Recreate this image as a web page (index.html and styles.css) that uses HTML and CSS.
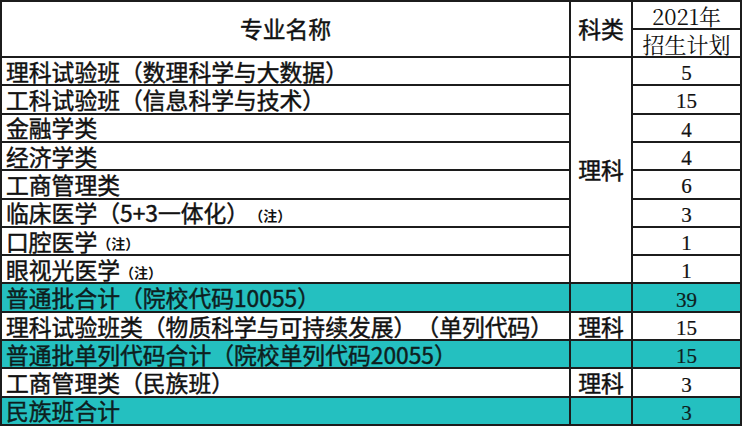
FILE: index.html
```html
<!DOCTYPE html>
<html lang="zh-CN">
<head>
<meta charset="utf-8">
<title>2021年招生计划</title>
<link rel="stylesheet" href="styles.css">
</head>
<body>
<div class="sheet">
  <div class="c hname">专业名称</div>
  <div class="c hcat">科类</div>
  <div class="c hyear">2021年</div>
  <div class="c hplan">招生计划</div>

  <div class="c name">理科试验班（数理科学与大数据）</div>
  <div class="c cat span8">理科</div>
  <div class="c num">5</div>

  <div class="c name">工科试验班（信息科学与技术）</div>
  <div class="c num">15</div>

  <div class="c name">金融学类</div>
  <div class="c num">4</div>

  <div class="c name">经济学类</div>
  <div class="c num">4</div>

  <div class="c name">工商管理类</div>
  <div class="c num">6</div>

  <div class="c name">临床医学（5+3一体化）<span class="note">（注）</span></div>
  <div class="c num">3</div>

  <div class="c name">口腔医学<span class="note">（注）</span></div>
  <div class="c num">1</div>

  <div class="c name">眼视光医学<span class="note">（注）</span></div>
  <div class="c num">1</div>

  <div class="c name teal">普通批合计（院校代码10055）</div>
  <div class="c cat teal"></div>
  <div class="c num teal">39</div>

  <div class="c name">理科试验班类（物质科学与可持续发展）（单列代码）</div>
  <div class="c cat">理科</div>
  <div class="c num">15</div>

  <div class="c name teal">普通批单列代码合计（院校单列代码20055）</div>
  <div class="c cat teal"></div>
  <div class="c num teal">15</div>

  <div class="c name">工商管理类（民族班）</div>
  <div class="c cat">理科</div>
  <div class="c num">3</div>

  <div class="c name teal">民族班合计</div>
  <div class="c cat teal"></div>
  <div class="c num teal">3</div>
</div>
</body>
</html>
```

FILE: styles.css
```css
html, body {
  margin: 0;
  padding: 0;
  background: #ffffff;
}

body {
  width: 744px;
  height: 426px;
  overflow: hidden;
  font-family: "Noto Sans CJK SC", "Noto Sans", sans-serif;
  color: #111111;
  text-spacing-trim: space-all;
}

.sheet {
  box-sizing: border-box;
  width: 742px;
  height: 426px;
  display: grid;
  grid-template-columns: 567px 60px 107px;
  grid-template-rows: 26px 26px repeat(13, minmax(0, 1fr));
  gap: 2px;
  padding: 2px;
  background: #1c1c1c;
}

.c {
  min-height: 0;
  background: #ffffff;
  display: flex;
  align-items: center;
  justify-content: center;
  font-size: 22.8px;
  font-weight: 400;
  line-height: 1;
  white-space: nowrap;
  -webkit-text-stroke: 0.45px currentColor;
}

.hname {
  grid-column: 1;
  grid-row: span 2;
  padding-top: 1px;
}

.hcat {
  grid-column: 2;
  grid-row: span 2;
  padding-top: 1px;
}

.hyear,
.hplan {
  grid-column: 3;
  font-family: "Noto Serif CJK SC", "Liberation Serif", "Noto Sans CJK SC", serif;
  font-size: 22px;
  -webkit-text-stroke: 0;
  padding-top: 2px;
}

.name {
  grid-column: 1;
  justify-content: flex-start;
  padding-left: 4px;
  padding-top: 2px;
}

.cat {
  grid-column: 2;
  padding-top: 2px;
}

.span8 {
  grid-row: span 8;
  padding-top: 0;
}

.num {
  grid-column: 3;
  font-family: "Liberation Serif", serif;
  font-size: 21px;
  -webkit-text-stroke: 0.2px currentColor;
  padding-top: 5px;
}

.note {
  font-size: 14px;
  font-weight: 700;
  padding-top: 3px;
  -webkit-text-stroke: 0;
}

.teal {
  background: #24c0c0;
  color: #0e1e1e;
}
```
